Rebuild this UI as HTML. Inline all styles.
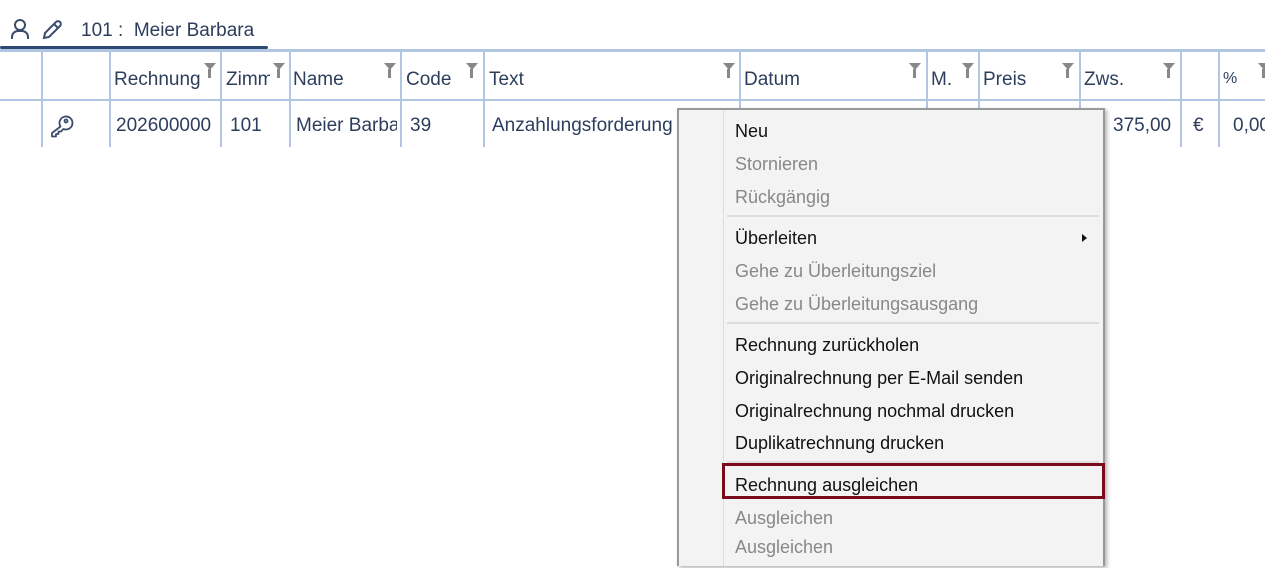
<!DOCTYPE html>
<html style="overflow:hidden;height:568px"><head><meta charset="utf-8"><style>
body{margin:0;width:1265px;height:568px;overflow:hidden;background:#fff;font-family:"Liberation Sans",sans-serif;position:relative;color:#2c3e5c}
.a{position:absolute;white-space:nowrap}
.vl{position:absolute;width:2px;background:#b0c6e2;top:52px;height:95px}
.f{position:absolute;top:63px;width:0;height:0;border-left:6px solid transparent;border-right:6px solid transparent;border-top:7px solid #888}
.f:after{content:"";position:absolute;left:-2px;top:-1px;width:3px;height:9px;background:#888}
.h{top:69px;font-size:19px}
.c{top:115px;font-size:19px}
.m{position:absolute;left:677px;top:108px;width:424px;height:456px;background:#f3f3f3;border:2px solid #999;border-bottom:none;box-shadow:2px 2px 4px rgba(0,0,0,.3)}
.mi{position:absolute;left:56px;font-size:18px;color:#111}
.d{color:#888}
.sep{position:absolute;left:48px;width:372px;height:2px;background:#ddd}
</style></head><body>
<svg class="a" style="left:9px;top:18px" width="22" height="22" viewBox="0 0 22 22" fill="none" stroke="#3c4c6c" stroke-width="2"><circle cx="11" cy="7" r="5"/><path d="M3 21v-2a6 6 0 0 1 6-6h4a6 6 0 0 1 6 6v2"/></svg>
<svg class="a" style="left:40px;top:18px" width="24" height="22" viewBox="0 0 24 22" fill="none" stroke="#3c4c6c" stroke-width="2"><path d="M4 20l1-5L16 4a2.5 2.5 0 0 1 4 4L9 19z M14 6l4 4"/></svg>
<div class="a" style="left:81px;top:20px;font-size:19px">101 :&nbsp; Meier Barbara</div>
<div class="a" style="left:0;top:46px;width:268px;height:3px;background:#2e4a70;border-radius:2px"></div>
<div class="a" style="left:0;top:49px;width:1265px;height:3px;background:#b0c6e2"></div>
<div class="a" style="left:0;top:99px;width:1265px;height:2px;background:#b0c6e2"></div>
<div class="vl" style="left:41px"></div><div class="vl" style="left:109px"></div><div class="vl" style="left:220px"></div><div class="vl" style="left:289px"></div><div class="vl" style="left:400px"></div><div class="vl" style="left:483px"></div><div class="vl" style="left:739px"></div><div class="vl" style="left:926px"></div><div class="vl" style="left:978px"></div><div class="vl" style="left:1079px"></div><div class="vl" style="left:1180px"></div><div class="vl" style="left:1218px"></div>
<div class="a h" style="left:114px">Rechnung</div><div class="f" style="left:204px"></div>
<div class="a h" style="left:226px;width:44px;overflow:hidden">Zimmer</div><div class="f" style="left:273px"></div>
<div class="a h" style="left:293px">Name</div><div class="f" style="left:384px"></div>
<div class="a h" style="left:406px">Code</div><div class="f" style="left:466px"></div>
<div class="a h" style="left:489px">Text</div><div class="f" style="left:723px"></div>
<div class="a h" style="left:744px">Datum</div><div class="f" style="left:909px"></div>
<div class="a h" style="left:931px">M.</div><div class="f" style="left:962px"></div>
<div class="a h" style="left:983px">Preis</div><div class="f" style="left:1062px"></div>
<div class="a h" style="left:1084px">Zws.</div><div class="f" style="left:1163px"></div>
<div class="a h" style="left:1223px;font-size:16px;top:70px">%</div><div class="f" style="left:1258px"></div>
<svg class="a" style="left:48px;top:113px" width="26" height="26" viewBox="0 0 26 26" fill="none" stroke="#3c4c6c" stroke-width="1.8" stroke-linejoin="round"><path d="M12.5 13.5a6.5 6.5 0 1 1 3 2.5L13 18.5h-2.5V21H8v2.5H4v-3.5z"/><circle cx="18" cy="8" r="1.5"/></svg>
<div class="a c" style="left:116px;width:102px;overflow:hidden">202600000</div>
<div class="a c" style="left:230px">101</div>
<div class="a c" style="left:296px;width:101px;overflow:hidden">Meier Barbara</div>
<div class="a c" style="left:410px">39</div>
<div class="a c" style="left:492px">Anzahlungsforderung</div>
<div class="a c" style="left:1113px">375,00</div>
<div class="a c" style="left:1193px">€</div>
<div class="a c" style="left:1233px">0,00</div>
<div class="m">
<div class="a" style="left:44px;top:0;width:1px;height:456px;background:#ddd"></div>
<div class="mi" style="top:11px">Neu</div>
<div class="mi d" style="top:44px">Stornieren</div>
<div class="mi d" style="top:77px">Rückgängig</div>
<div class="sep" style="top:105px"></div>
<div class="mi" style="top:118px">Überleiten</div>
<div class="a" style="left:403px;top:124px;border-left:5px solid #111;border-top:4px solid transparent;border-bottom:4px solid transparent"></div>
<div class="mi d" style="top:151px">Gehe zu Überleitungsziel</div>
<div class="mi d" style="top:184px">Gehe zu Überleitungsausgang</div>
<div class="sep" style="top:212px"></div>
<div class="mi" style="top:225px">Rechnung zurückholen</div>
<div class="mi" style="top:258px">Originalrechnung per E-Mail senden</div>
<div class="mi" style="top:291px">Originalrechnung nochmal drucken</div>
<div class="mi" style="top:323px">Duplikatrechnung drucken</div>
<div class="sep" style="top:351px"></div>
<div class="a" style="left:43px;top:353px;width:377px;height:30px;border:3px solid #7a0a1c"></div>
<div class="mi" style="top:365px">Rechnung ausgleichen</div>
<div class="mi d" style="top:398px">Ausgleichen</div>
<div class="mi d" style="top:427px">Ausgleichen</div>
</div>
</body></html>
